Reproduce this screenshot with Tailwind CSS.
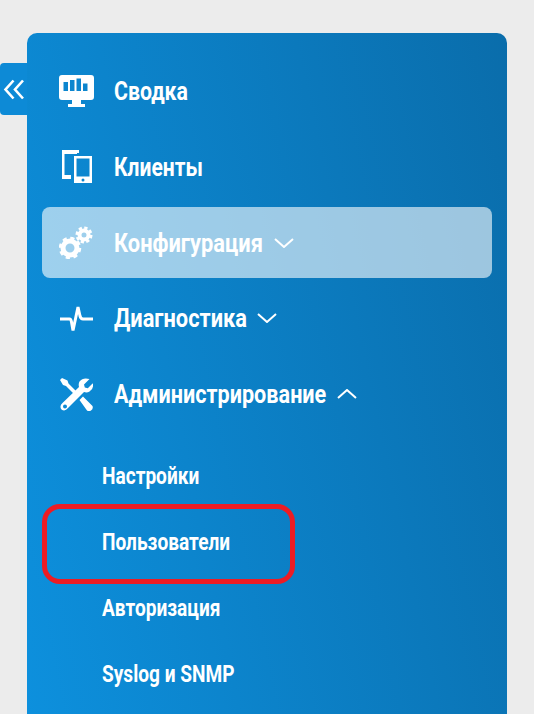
<!DOCTYPE html>
<html lang="ru"><head><meta charset="utf-8"><script src="https://cdn.jsdelivr.net/npm/@tailwindcss/browser@4"></script></head>
<body class="bg-[#ececec] h-[714px] overflow-hidden font-['Roboto',sans-serif]">
<div class="relative ml-[27px] mt-[33px] w-[480px] h-[681px] pt-[22.5px] px-[15px] rounded-t-[10px] bg-linear-[78deg] from-[#0d90dd] to-[#0a6dab] text-white">
  <button class="absolute left-[-27px] top-[30px] w-[27px] h-[52px] bg-[#0d8ad6] rounded-l-[4px] flex items-center justify-center">
    <svg width="21" height="21" viewBox="0 0 21 21" fill="none" stroke="#fff" stroke-width="2.600"><path d="M10.500 1.500 2.500 10.500l8 9M20 1.500 12 10.500l8 9"/></svg>
  </button>
  <nav class="flex flex-col gap-[4.750px]">
    <a class="h-[71px] flex items-center pl-[17px] rounded-lg">
      <svg class="w-[35px] h-[32px] shrink-0" viewBox="0 0 35 32"><path fill="#fff" fill-rule="evenodd" d="M3 0h29a3 3 0 0 1 3 3v19a3 3 0 0 1-3 3H22v4h4v3H9v-3h4v-4H3a3 3 0 0 1-3-3V3a3 3 0 0 1 3-3ZM4.500 7v9H9V7Zm6.500-2v11h4.500V5Zm6.500-1.500V16H22V3.500Zm6.500 5V16h4.500V8.500Z"/></svg>
      <span class="w-[73px] ml-[20px] text-[26px] leading-none font-bold whitespace-nowrap origin-left scale-x-[0.82]">Сводка</span>
    </a>
    <a class="h-[71px] flex items-center pl-[20px] rounded-lg">
      <svg class="w-[30px] h-[33px] shrink-0" viewBox="0 0 30 33"><path fill="#fff" fill-rule="evenodd" d="M0 0h17v3h-2v1H2.500v21H9v4H0ZM12 6h18v27H12Zm2.500 2.500v18h13v-18Zm6.500 20a1.500 1.500 0 1 0 0 3 1.500 1.500 0 0 0 0-3Z"/></svg>
      <span class="w-[90px] ml-[22px] text-[26px] leading-none font-bold whitespace-nowrap origin-left scale-x-[0.81]">Клиенты</span>
    </a>
    <a class="h-[71px] flex items-center pl-[17px] rounded-lg bg-white/60 text-white">
      <svg class="w-[34px] h-[33px] shrink-0" viewBox="0 0 34 33" fill="none" stroke="#fff"><circle cx="11" cy="22" r="7" stroke-width="5"/><circle cx="11" cy="22" r="9.500" stroke-width="3.500" stroke-dasharray="4 3.460"/><circle cx="25" cy="9" r="4.500" stroke-width="4"/><circle cx="25" cy="9" r="7" stroke-width="3" stroke-dasharray="3.200 2.300"/></svg>
      <span class="w-[150px] ml-[21px] text-[26px] leading-none font-bold whitespace-nowrap origin-left scale-x-[0.84]">Конфигурация</span>
      <svg class="ml-[10px] w-[20px] h-[10px]" viewBox="0 0 20 10" fill="none" stroke="#fff" stroke-width="2"><path d="m1 1 9 8 9-8"/></svg>
    </a>
    <a class="h-[71px] flex items-center pl-[18px] rounded-lg">
      <svg class="w-[33px] h-[29px] shrink-0" viewBox="0 0 33 29" fill="none" stroke="#fff" stroke-width="3"><path d="M0 15h9.500q1.500 0 2 3l1.500 8.500L18 3l2 9q.800 3 3 3h10"/></svg>
      <span class="w-[132px] ml-[21px] text-[26px] leading-none font-bold whitespace-nowrap origin-left scale-x-[0.84]">Диагностика</span>
      <svg class="ml-[11px] w-[20px] h-[10px]" viewBox="0 0 20 10" fill="none" stroke="#fff" stroke-width="2"><path d="m1 1 9 8 9-8"/></svg>
    </a>
    <a class="h-[71px] flex items-center pl-[18px] rounded-lg">
      <svg class="w-[33px] h-[33px] shrink-0" viewBox="0 0 33 33"><g fill="#fff"><path d="M2 0 0 2l3 5 3 1 10 10 2.500-2.500L8.500 5.500l-1-3Z"/><path fill-rule="evenodd" d="M29.500 1 24 6.500l.800 3 3 .800 5-5Q34 11 29.500 13.500q-2.500 1.500-5.500.500L8 30q-3 4-6.500 1.500Q-1 28 2.500 25L19 9q-.800-3 .500-5.500Q23-1 29.500 1ZM5 26.500a2 2 0 1 0 0 4 2 2 0 0 0 0-4Z"/><path d="m19.500 22 2.500-2.500 1-1 9.500 9.500q1 3-1.500 4.500-2 1.500-4 0Z"/></g></svg>
      <span class="w-[212px] ml-[21px] text-[26px] leading-none font-bold whitespace-nowrap origin-left scale-x-[0.832]">Администрирование</span>
      <svg class="ml-[11px] w-[20px] h-[10px]" viewBox="0 0 20 10" fill="none" stroke="#fff" stroke-width="2"><path d="m1 9 9-8 9 8"/></svg>
    </a>
  </nav>
  <ul class="relative mt-[13.500px] flex flex-col text-[23px] leading-none font-bold">
    <li class="h-[66px] flex items-center pl-[60px]"><span class="origin-left scale-x-[0.83] whitespace-nowrap">Настройки</span></li>
    <li class="h-[66px] flex items-center pl-[60px]"><span class="origin-left scale-x-[0.83] whitespace-nowrap">Пользователи</span></li>
    <li class="h-[66px] flex items-center pl-[60px]"><span class="origin-left scale-x-[0.83] whitespace-nowrap">Авторизация</span></li>
    <li class="h-[66px] flex items-center pl-[60px]"><span class="origin-left scale-x-[0.83] whitespace-nowrap">Syslog и SNMP</span></li>
    <div class="absolute left-0 top-[61px] w-[253px] h-[80px] border-[5px] border-[#ed1c24] rounded-[18px]"></div>
  </ul>
</div>
</body></html>
